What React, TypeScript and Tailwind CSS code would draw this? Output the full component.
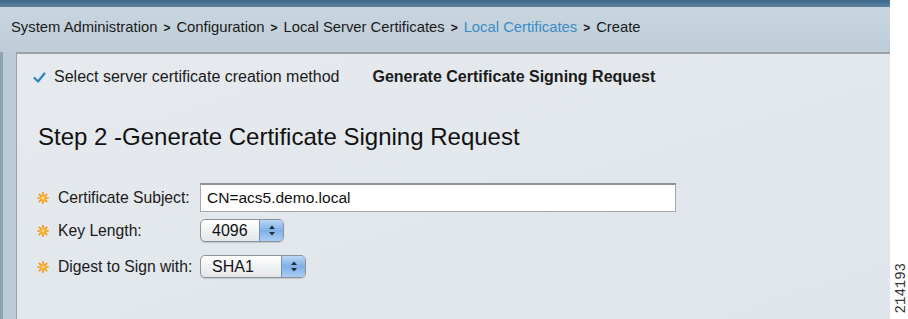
const Gear = () => (
  <svg width="12" height="12" viewBox="0 0 12 12" className="shrink-0">
    <g stroke="#f29a1f" strokeWidth="1.7" strokeLinecap="round">
      <line x1="6" y1="0.8" x2="6" y2="11.2" />
      <line x1="0.8" y1="6" x2="11.2" y2="6" />
      <line x1="2.3" y1="2.3" x2="9.7" y2="9.7" />
      <line x1="9.7" y1="2.3" x2="2.3" y2="9.7" />
    </g>
    <circle cx="6" cy="6" r="3.5" fill="#f6ad2c" />
    <circle cx="6" cy="6" r="1.4" fill="#fde3a8" />
  </svg>
);

const Stepper = () => (
  <svg width="8" height="13" viewBox="0 0 8 13">
    <path d="M4 1.5 L7 5 H1 Z" fill="#1f2d3a" />
    <path d="M4 11.5 L7 8 H1 Z" fill="#1f2d3a" />
  </svg>
);

const Select = ({ value, width }: { value: string; width: string }) => (
  <div
    className={`flex h-[23px] ${width} items-stretch overflow-hidden rounded-[5px] border border-[#8d949b] bg-gradient-to-b from-white to-[#e3e5e8] shadow-[0_1px_1px_rgba(0,0,0,0.15)]`}
  >
    <div className="flex flex-1 items-center pl-[11px] text-[16px] text-[#111]">{value}</div>
    <div className="flex w-[24px] items-center justify-center border-l border-[#6f93c4] bg-gradient-to-b from-[#bcd6f3] via-[#7fb0e8] to-[#a8cdf3]">
      <Stepper />
    </div>
  </div>
);

const crumbs = ['System Administration', 'Configuration', 'Local Server Certificates'];

export default function App() {
  return (
    <div className="flex h-[319px] w-[908px] bg-white font-['Liberation_Sans',Arial,sans-serif] text-[#1a1a1a]">
      <div className="flex w-[890px] flex-col bg-[#c2d0db]">
        <div className="h-[7px] bg-gradient-to-b from-[#3e6888] to-[#5b84a2]" />
        <div className="flex h-[45px] items-center bg-gradient-to-b from-[#c9d6e0] to-[#bfcdd8] pb-[4px] pl-[11px] text-[14.8px]">
          {crumbs.map((c) => (
            <span key={c} className="flex items-center">
              <span>{c}</span>
              <span className="mx-[6px] text-[12px] font-bold">&gt;</span>
            </span>
          ))}
          <span className="text-[#3b8cc6]">Local Certificates</span>
          <span className="mx-[6px] text-[12px] font-bold">&gt;</span>
          <span>Create</span>
        </div>
        <div className="flex flex-1">
          <div className="w-[16px] border-l-[3px] border-[#8ea3b4] bg-[#bccbd7]" />
          <div className="flex flex-1 flex-col border-l border-t-2 border-[#98a3ab] bg-gradient-to-br from-[#e6eaee] to-[#dfe5eb]">
            <div className="mt-[13px] flex h-[20px] items-center text-[16px]">
              <svg width="13" height="11" viewBox="0 0 13 11" className="ml-[16px] mr-[8px]">
                <path d="M1.5 6 L5 9.5 L11.5 1.5" fill="none" stroke="#2f84c0" strokeWidth="2.2" strokeLinecap="round" strokeLinejoin="round" />
              </svg>
              <span>Select server certificate creation method</span>
              <span className="ml-[33px] font-bold">Generate Certificate Signing Request</span>
            </div>
            <div className="ml-[21px] mt-[36px] text-[24px] leading-[28px] text-[#111]">
              Step 2 -Generate Certificate Signing Request
            </div>
            <div className="mt-[32px] flex flex-col text-[15.7px]">
              <div className="flex h-[29px] items-center">
                <span className="ml-[20px]"><Gear /></span>
                <span className="ml-[9px] w-[142px]">Certificate Subject:</span>
                <div className="flex h-[29px] w-[476px] items-center border border-t-2 border-[#a5a9ad] border-t-[#8e9296] bg-white pl-[6px] text-[15.5px] text-[#111]">
                  CN=acs5.demo.local
                </div>
              </div>
              <div className="mt-[7px] flex h-[23px] items-center">
                <span className="ml-[20px]"><Gear /></span>
                <span className="ml-[9px] w-[142px]">Key Length:</span>
                <Select value="4096" width="w-[84px]" />
              </div>
              <div className="mt-[13px] flex h-[23px] items-center">
                <span className="ml-[20px]"><Gear /></span>
                <span className="ml-[9px] w-[142px]">Digest to Sign with:</span>
                <Select value="SHA1" width="w-[106px]" />
              </div>
            </div>
          </div>
        </div>
      </div>
      <div className="flex flex-1 items-end justify-center pb-[6px] pl-[4px]">
        <span className="rotate-180 font-['Liberation_Mono',monospace] text-[14px] leading-none text-[#333] [writing-mode:vertical-rl]">
          214193
        </span>
      </div>
    </div>
  );
}
